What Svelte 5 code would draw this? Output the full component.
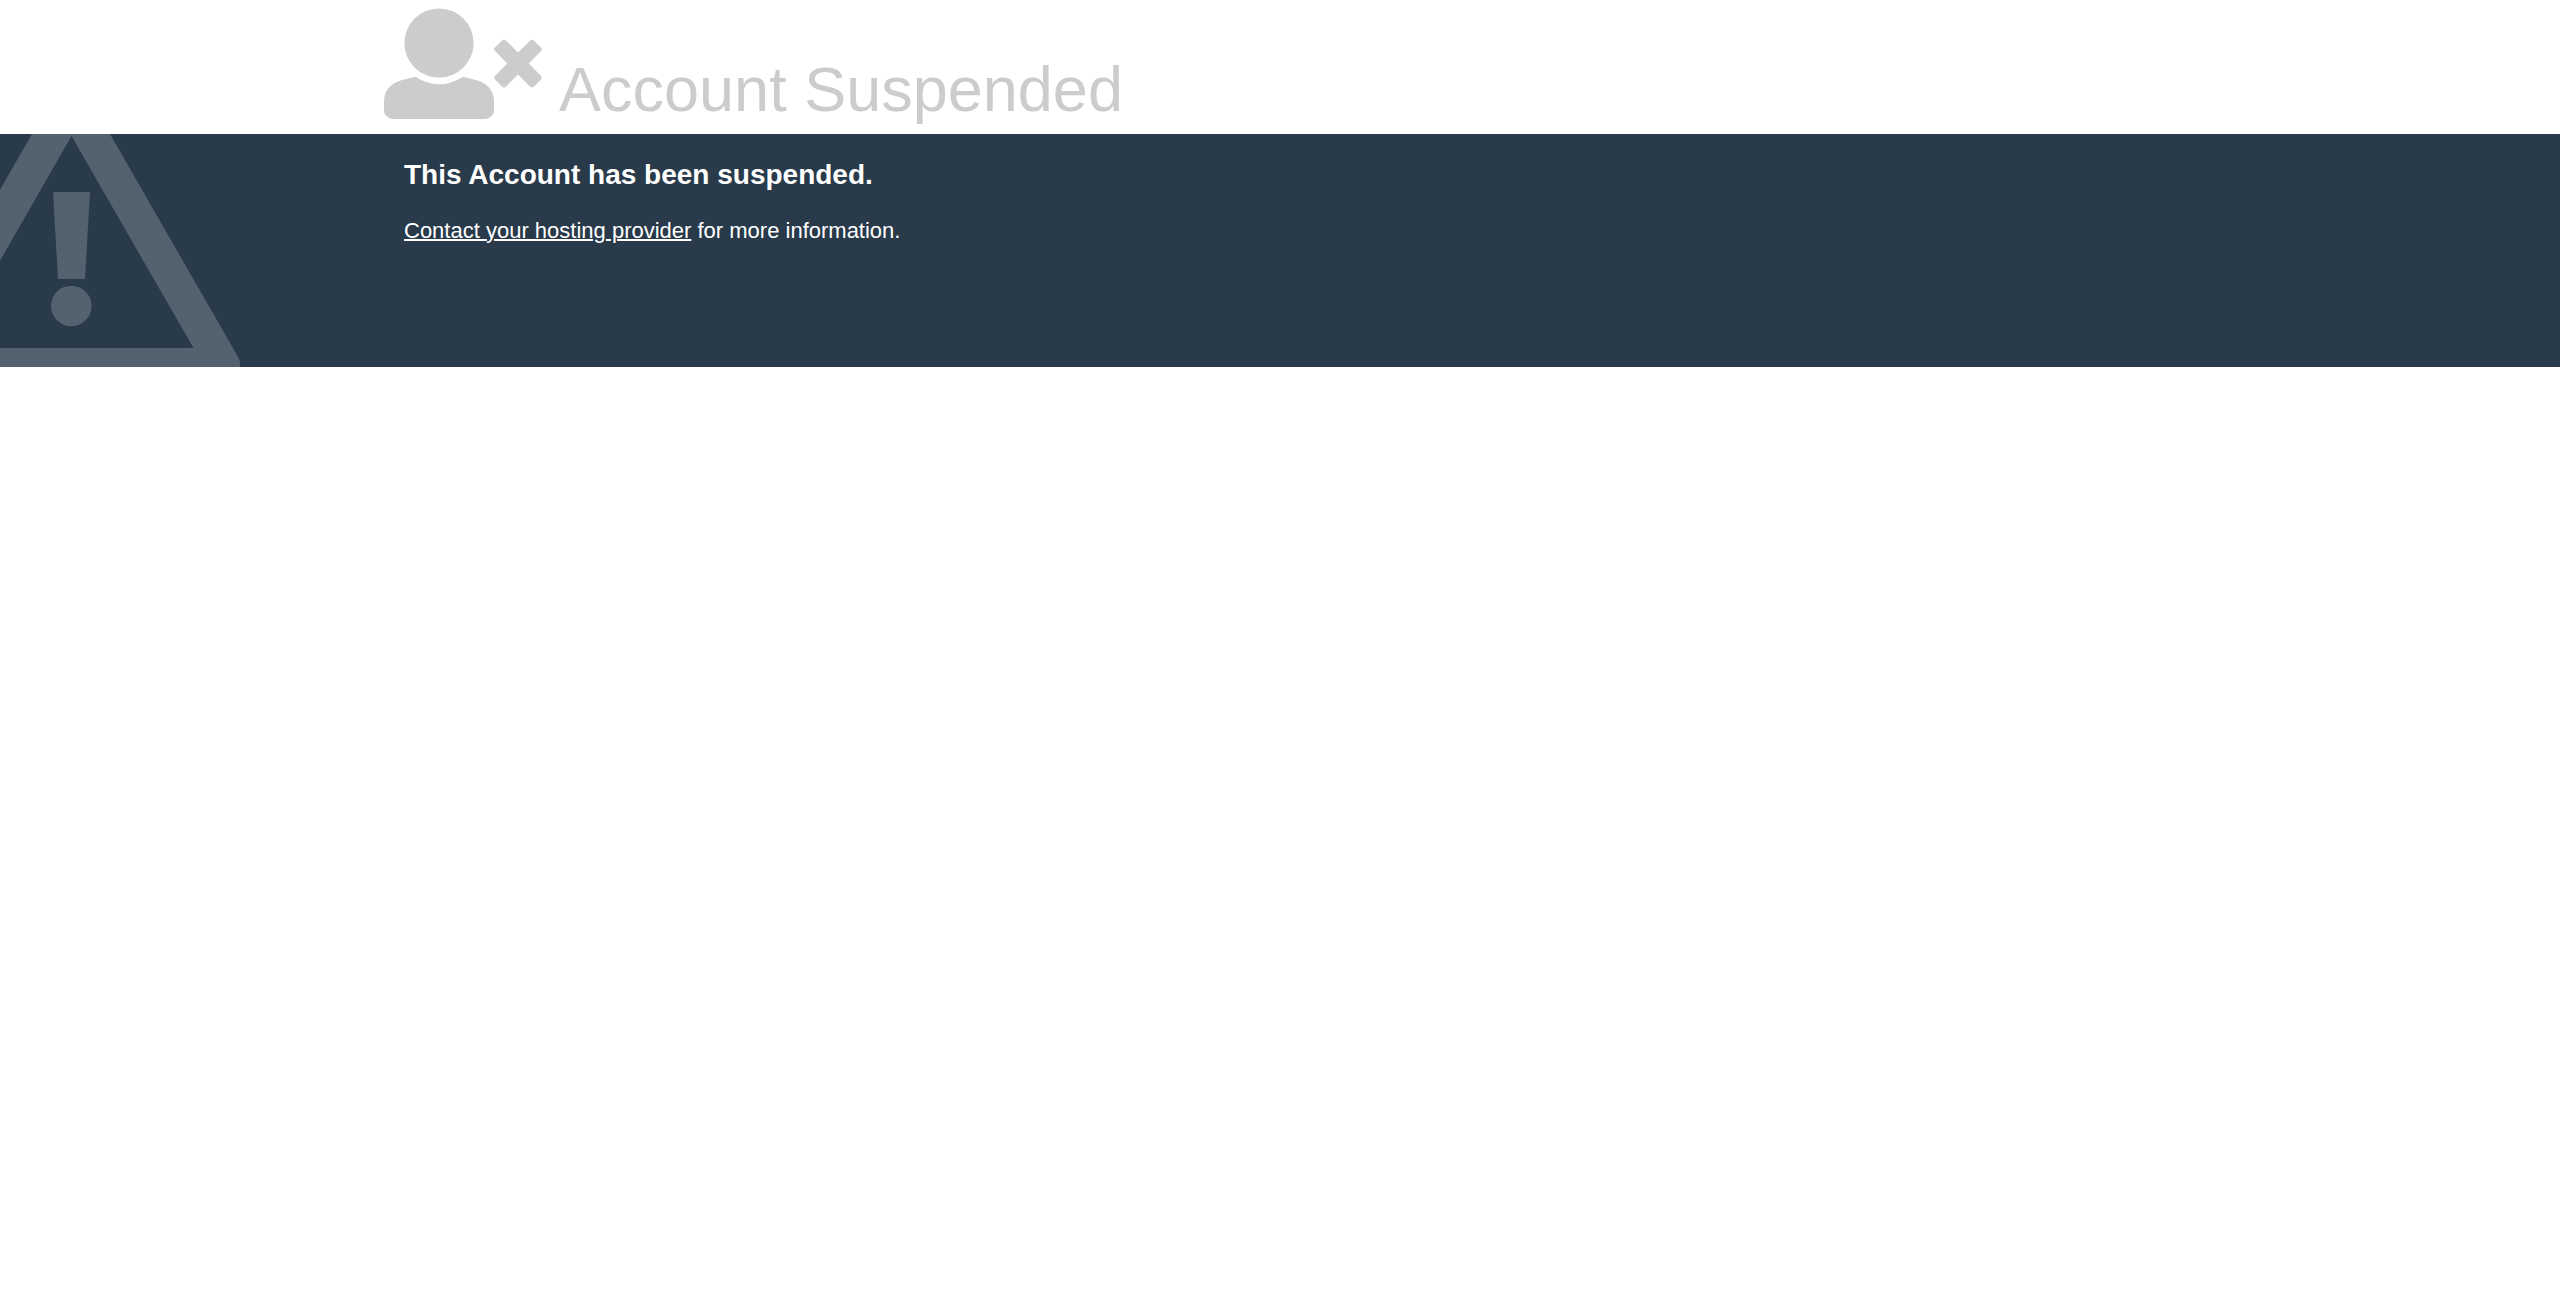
<script>
  const title = 'Account Suspended';
</script>

<header>
  <svg class="user" viewBox="0 0 160 120" aria-hidden="true">
    <circle cx="55" cy="43" r="34.6" />
    <path d="M31.5 76.7Q55 92 79 76.7L92 80Q110 85 110 102V110Q110 114 107 116.500Q104 119 101 119H9Q6 119 3 116.500Q0 114 0 110V102Q0 85 18 80Z" />
    <path d="M118.200 40.400Q120 39 121.800 40.400L134 52.500L146.200 40.400Q148 39 149.800 40.400L157 47.500Q158.600 49.200 157 51L144.800 63.500L157 76Q158.600 77.800 157 79.500L149.800 86.800Q148 88.400 146.200 86.800L134 74.500L121.800 86.800Q120 88.400 118.200 86.800L111 79.500Q109.400 77.800 111 76L123.200 63.500L111 51Q109.400 49.200 111 47.500Z" />
  </svg>
  <h1>{title}</h1>
</header>

<main>
  <svg class="warning" viewBox="0 0 240 233" aria-hidden="true">
    <path fill-rule="evenodd" d="M32 0H110L237 221Q240 226 240 229V233H-98V229Q-98 226 -95 221ZM71.500 2L-50 214H193.500Z" />
    <path d="M53 58H90L85 145H58Z" />
    <circle cx="71.300" cy="172" r="20.300" />
  </svg>
  <section>
    <h2>This Account has been suspended.</h2>
    <p><a href="#contact">Contact your hosting provider</a> for more information.</p>
  </section>
</main>

<style>
  :global(body) {
    margin: 0;
    background: #fff;
    font-family: "Liberation Sans", Arial, sans-serif;
  }

  header {
    display: flex;
    align-items: flex-end;
    gap: 15px;
    padding: 0 15%;
    min-height: 134px;
    color: #ccc;
    box-sizing: border-box;
  }

  .user {
    width: 160px;
    height: 120px;
    flex: none;
    align-self: flex-start;
    fill: #ccc;
  }

  h1 {
    margin: 0 0 8px;
    font-size: 63px;
    font-weight: 400;
    line-height: 74px;
  }

  main {
    position: relative;
    min-height: 233px;
    padding: 20px 15%;
    box-sizing: border-box;
    overflow: hidden;
    background: #293a4a;
    color: #fff;
  }

  .warning {
    position: absolute;
    left: 0;
    bottom: 0;
    width: 240px;
    height: 233px;
    fill: #54616e;
  }

  section {
    position: relative;
    padding: 0 20px;
  }

  h2 {
    margin: 0 0 22px;
    font-size: 28px;
    line-height: 42px;
  }

  p {
    margin: 0;
    font-size: 22px;
    line-height: 26px;
  }

  a {
    color: inherit;
    text-decoration-thickness: 2px;
  }
</style>
